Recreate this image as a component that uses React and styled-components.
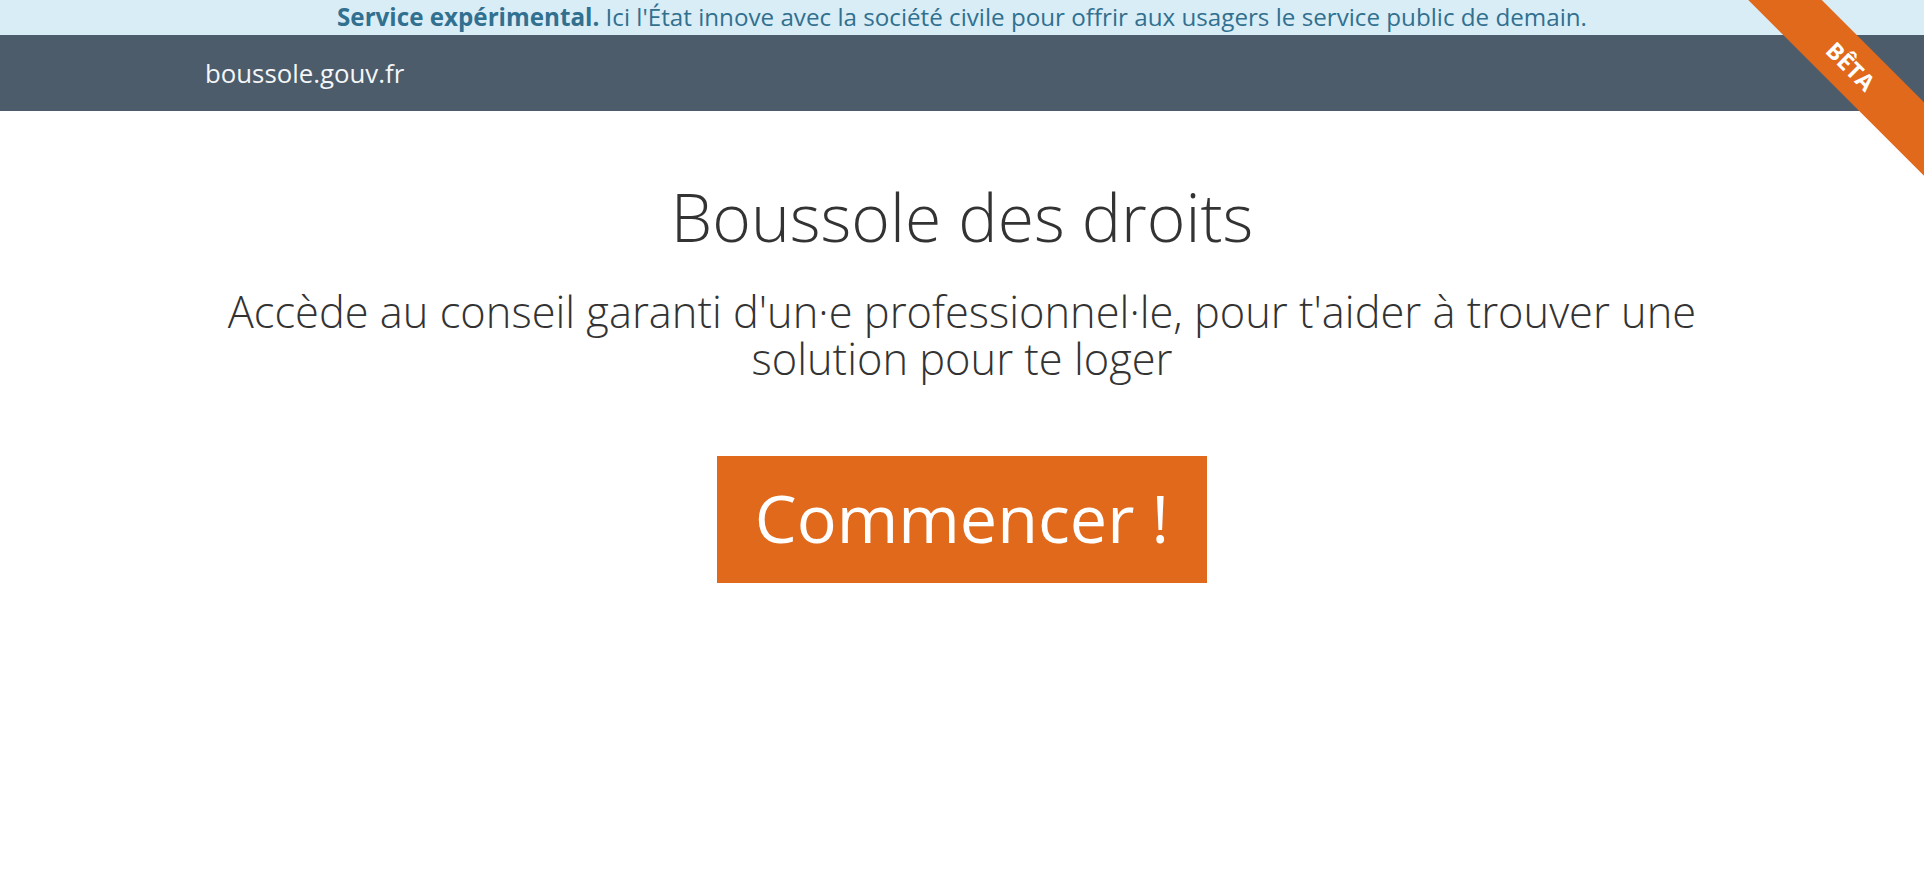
import React from 'react';
import styled, { createGlobalStyle } from 'styled-components';

const GlobalStyle = createGlobalStyle`
  html, body {
    margin: 0;
    padding: 0;
    background: #fff;
  }
  body {
    font-family: "Open Sans", "Liberation Sans", sans-serif;
    color: #333;
  }
`

const Page = styled.div`
  position: relative;
  min-height: 881px;
  overflow: hidden;
`

const Notice = styled.div`
  height: 35px;
  line-height: 34px;
  background: #d9edf7;
  color: #31708f;
  font-size: 24.2px;
  text-align: center;
  white-space: nowrap;

  strong {
    font-weight: 700;
  }
`

const Navbar = styled.header`
  height: 76px;
  background: #4c5c6b;
`

const Container = styled.div`
  max-width: 1514px;
  margin: 0 auto;
`

const Brand = styled.a`
  display: block;
  line-height: 76px;
  font-size: 25.8px;
  color: #f4f6f8;
  text-decoration: none;
`

const Hero = styled.main`
  display: flex;
  flex-direction: column;
  align-items: center;
  text-align: center;
  padding-top: 69px;
`

const Title = styled.h1`
  margin: 0;
  font-size: 66px;
  line-height: 1.1;
  font-weight: 300;
  color: #333;
`

const Lead = styled.p`
  margin: 35px 0 0;
  font-size: 43.4px;
  line-height: 47px;
  font-weight: 300;
  color: #333;
`

const StartButton = styled.a`
  display: flex;
  align-items: center;
  justify-content: center;
  box-sizing: border-box;
  height: 127px;
  margin-top: 74px;
  padding: 0 38px 4px;
  background: #e0691b;
  color: #fff;
  font-size: 66.5px;
  font-weight: 400;
  text-decoration: none;
  cursor: pointer;
`

const RibbonCorner = styled.div`
  position: absolute;
  top: 0;
  right: 0;
  width: 180px;
  height: 180px;
  overflow: hidden;
  pointer-events: none;
`

const Ribbon = styled.div`
  position: absolute;
  left: -43px;
  top: 40px;
  width: 300px;
  height: 52px;
  line-height: 52px;
  background: #e0691b;
  color: #fff;
  font-size: 23px;
  font-weight: 700;
  text-align: center;
  transform: rotate(45deg);
`

export default function App() {
  return (
    <Page>
      <GlobalStyle />
      <Notice>
        <strong>Service expérimental.</strong> Ici l'État innove avec la société civile pour offrir aux usagers le service public de demain.
      </Notice>
      <Navbar>
        <Container>
          <Brand href="#">boussole.gouv.fr</Brand>
        </Container>
      </Navbar>
      <Container>
        <Hero>
          <Title>Boussole des droits</Title>
          <Lead>
            Accède au conseil garanti d'un·e professionnel·le, pour t'aider à trouver une solution pour te loger
          </Lead>
          <StartButton>Commencer !</StartButton>
        </Hero>
      </Container>
      <RibbonCorner>
        <Ribbon>BÊTA</Ribbon>
      </RibbonCorner>
    </Page>
  );
}
